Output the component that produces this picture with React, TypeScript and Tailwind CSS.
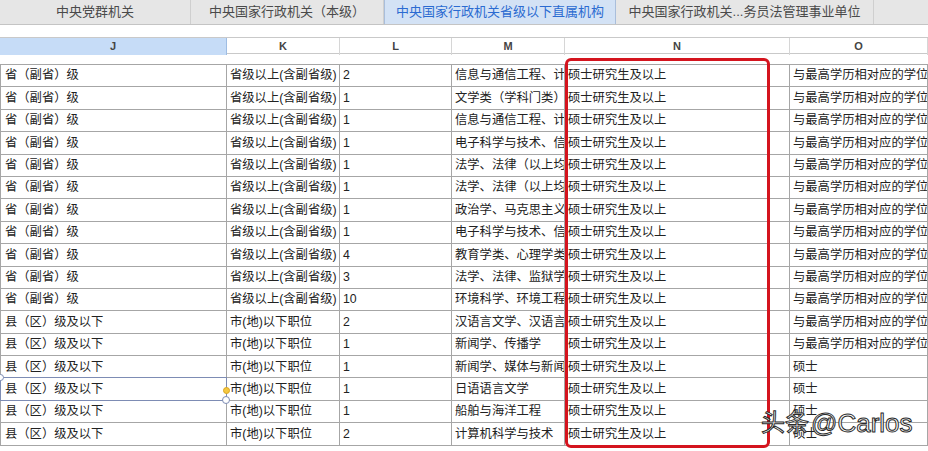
const FONT = '"Liberation Sans", "Noto Sans CJK SC", sans-serif'

type Row = [string, string, string, string, string, string]

const SHENG = '省（副省）级'
const SHENG_K = '省级以上(含副省级)'
const XIAN = '县（区）级及以下'
const XIAN_K = '市(地)以下职位'
const SHUOSHI = '硕士研究生及以上'
const XUEWEI = '与最高学历相对应的学位'

const rows: Row[] = [
  [SHENG, SHENG_K, '2', '信息与通信工程、计', SHUOSHI, XUEWEI],
  [SHENG, SHENG_K, '1', '文学类（学科门类）', SHUOSHI, XUEWEI],
  [SHENG, SHENG_K, '1', '信息与通信工程、计', SHUOSHI, XUEWEI],
  [SHENG, SHENG_K, '1', '电子科学与技术、信', SHUOSHI, XUEWEI],
  [SHENG, SHENG_K, '1', '法学、法律（以上均', SHUOSHI, XUEWEI],
  [SHENG, SHENG_K, '1', '法学、法律（以上均', SHUOSHI, XUEWEI],
  [SHENG, SHENG_K, '1', '政治学、马克思主义', SHUOSHI, XUEWEI],
  [SHENG, SHENG_K, '1', '电子科学与技术、信', SHUOSHI, XUEWEI],
  [SHENG, SHENG_K, '4', '教育学类、心理学类', SHUOSHI, XUEWEI],
  [SHENG, SHENG_K, '3', '法学、法律、监狱学', SHUOSHI, XUEWEI],
  [SHENG, SHENG_K, '10', '环境科学、环境工程', SHUOSHI, XUEWEI],
  [XIAN, XIAN_K, '2', '汉语言文学、汉语言', SHUOSHI, XUEWEI],
  [XIAN, XIAN_K, '1', '新闻学、传播学', SHUOSHI, XUEWEI],
  [XIAN, XIAN_K, '1', '新闻学、媒体与新闻', SHUOSHI, '硕士'],
  [XIAN, XIAN_K, '1', '日语语言文学', SHUOSHI, '硕士'],
  [XIAN, XIAN_K, '1', '船舶与海洋工程', SHUOSHI, '硕士'],
  [XIAN, XIAN_K, '2', '计算机科学与技术', SHUOSHI, '硕士'],
]

const SELECTED_ROW = 14

const tabs = [
  { label: '中央党群机关', w: 'w-[191px]', active: false },
  { label: '中央国家行政机关（本级）', w: 'w-[193px]', active: false },
  { label: '中央国家行政机关省级以下直属机构', w: 'w-[232px]', active: true },
  { label: '中央国家行政机关...务员法管理事业单位', w: 'w-[258px]', active: false },
]

const cols = 'grid grid-cols-[227px_113px_112px_113px_225px_138px]'
const heads = ['J', 'K', 'L', 'M', 'N', 'O']

export default function App() {
  return (
    <div className="relative h-[451px] w-[928px] overflow-hidden bg-white text-[#222]" style={{ fontFamily: FONT }}>
      {/* sheet tabs */}
      <div className="flex h-[25px] border-b border-[#c4c4c4] bg-[#e6e6e6] text-[13px]">
        {tabs.map((t) => (
          <div
            key={t.label}
            className={
              t.active
                ? `${t.w} flex items-center justify-center border-x border-[#a9bedb] bg-[#d3e2f5] text-[#2b6bd1]`
                : `${t.w} flex items-center justify-center border-r border-[#cfcfcf] text-[#4a4a4a]`
            }
          >
            {t.label}
          </div>
        ))}
      </div>

      {/* column headers */}
      <div className={`${cols} mt-[12px] h-[17px] border-y border-[#c9c9c9] text-[11px] font-bold text-[#444]`}>
        {heads.map((h) => (
          <div
            key={h}
            className={
              h === 'J'
                ? 'flex items-center justify-center border-r border-[#9fbde3] bg-[#c6dcf7]'
                : 'flex items-center justify-center border-r border-[#d6d6d6]'
            }
          >
            {h}
          </div>
        ))}
      </div>

      {/* rows */}
      <div className="mt-[10px] border-t border-[#a6a6a6] text-[12.3px]">
        {rows.map((r, i) => (
          <div key={i} className={`${cols} h-[22.4px] border-b border-[#a6a6a6]`}>
            {r.map((c, j) =>
              j === 0 && i === SELECTED_ROW ? (
                <div key={j} className="relative flex items-center whitespace-nowrap border-l border-r border-[#a6a6a6] pl-[4px]">
                  {c}
                  <div className="absolute inset-[-1px] border border-[#7d8cb4]" />
                  <div className="absolute -left-[4px] -top-[4px] h-[7px] w-[7px] rounded-full border border-[#7d8cb4] bg-white" />
                  <div className="absolute -right-[4px] top-[9px] h-[7px] w-[7px] rounded-full border border-[#d9a520] bg-[#f5c842]" />
                  <div className="absolute -bottom-[4px] -right-[4px] h-[8px] w-[8px] rounded-full border border-[#7d8cb4] bg-white" />
                </div>
              ) : (
                <div
                  key={j}
                  className={`flex items-center overflow-hidden whitespace-nowrap border-r border-[#a6a6a6] ${
                    j === 0 ? 'border-l pl-[4px]' : 'pl-[3px]'
                  }`}
                >
                  {c}
                </div>
              ),
            )}
          </div>
        ))}
      </div>

      {/* red highlight box */}
      <div className="absolute left-[565px] top-[58px] h-[390px] w-[205px] rounded-[6px] border-[3px] border-[#d4141e]" />

      {/* watermark */}
      <div className="absolute left-[761px] top-[410px] flex items-center whitespace-nowrap leading-none text-white [-webkit-text-stroke:1px_#2b2b2b]">
        <span className="text-[24px]">头条</span>
        <span className="ml-[2px] text-[26px]">@Carlos</span>
      </div>
    </div>
  )
}
